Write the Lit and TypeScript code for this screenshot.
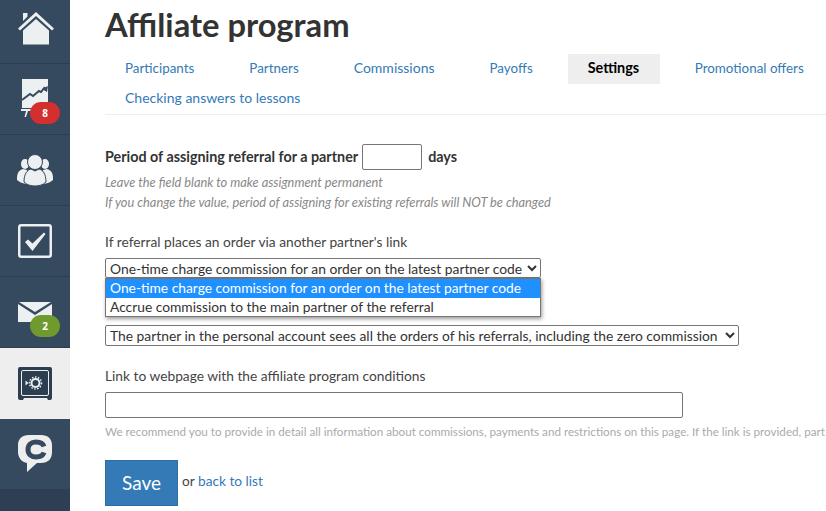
import { LitElement, html, css } from "lit";
import { customElement } from "lit/decorators.js";

const icons = {
  home: html`<svg width="36" height="33" viewBox="0 0 36 33"><path fill="#ecf0f1" d="M5 1h4.500v3.500L5 9zM18 0 36 16.500 34 18.500 18 4 2 18.500 0 16.500z"/><path fill="#ecf0f1" d="M18 7 31 18.500V32.500H5V18.500z"/></svg>`,
  chart: html`<svg width="28" height="40" viewBox="0 0 28 40"><path fill="#ecf0f1" d="M1 0h26v29H1z"/><path fill="#ecf0f1" d="M0 30h22v2H0zM5 32h2l-2 6H3.500z"/><path fill="none" stroke="#35495f" stroke-width="2" d="M1 21l8-6 3 2 6-5 2 1 4-5"/><path fill="#35495f" d="M27 7l-1 6-5-3z"/></svg>`,
  people: html`<svg width="36" height="32" viewBox="0 0 36 32"><ellipse cx="8" cy="10" rx="4" ry="5" fill="#ecf0f1"/><ellipse cx="28" cy="10" rx="4" ry="5" fill="#ecf0f1"/><path fill="#ecf0f1" d="M0 24c0-5 2-8 6-9l4 1-1 14C5 29 2 28 0 26zM36 24c0-5-2-8-6-9l-4 1 1 14c4-1 7-2 9-4z"/><circle cx="18" cy="8" r="7.500" fill="#ecf0f1" stroke="#35495f" stroke-width="1"/><path fill="#ecf0f1" stroke="#35495f" stroke-width="1" d="M7 28c0-8 3-12 7-13l4 2 4-2c4 1 7 5 7 13-3 3-7 4-11 4s-8-1-11-4z"/></svg>`,
  check: html`<svg width="34" height="34" viewBox="0 0 34 34"><rect x="1.250" y="1.250" width="31.500" height="31.500" rx="2" fill="#35495f" stroke="#ecf0f1" stroke-width="2.500"/><path fill="#ecf0f1" d="M7 18l3-2.500 4.500 4L26 8.500l1.500 1.500L14.500 27z"/></svg>`,
  mail: html`<svg width="34" height="20" viewBox="0 0 34 20"><path fill="#ecf0f1" d="M1 0h32L17 10zM0 2l17 11L34 2v18H0z"/></svg>`,
  safe: html`<svg width="34" height="34" viewBox="0 0 34 34"><path fill="#2c3e50" d="M2 0h30a2 2 0 0 1 2 2v29a2 2 0 0 1-2 2h-2l-1-2H6l-1 2H2a2 2 0 0 1-2-2V2a2 2 0 0 1 2-2z"/><rect x="3.500" y="3.500" width="27" height="25" rx="1.500" fill="none" stroke="#ecf0f1" stroke-width="1"/><circle cx="17.500" cy="16" r="4" fill="none" stroke="#ecf0f1" stroke-width="2"/><circle cx="17.500" cy="16" r="6" fill="none" stroke="#ecf0f1" stroke-width="1.500" stroke-dasharray="1.500 1.500"/><path fill="#ecf0f1" d="M7.500 13.500l3 2.500-3 2.500z"/></svg>`,
  chat: html`<svg width="34" height="38" viewBox="0 0 34 38"><path fill="#eeeeee" d="M11 0h12c7 0 11 4 11 10v7c0 7-4 11-11 11h-4l-10 9v-9c-5-1-9-5-9-11V10C0 4 4 0 11 0z"/><path fill="none" stroke="#35495f" stroke-width="5" d="M26 17.500c-1 3-4 4.500-8 4.500-5 0-8-3-8-7.500S13 7 18 7c4 0 7 1.500 8 4.500"/></svg>`,
};

@customElement("app-root")
export class AppRoot extends LitElement {
  static styles = css`
    :host {
      display: flex;
      width: 826px;
      height: 511px;
      overflow: hidden;
      background: #fff;
      font-family: "Lato", "Liberation Sans", sans-serif;
      color: #333;
    }
    .side {
      width: 70px;
      flex: none;
      background: #2f3f53;
      display: flex;
      flex-direction: column;
      height: 511px;
    }
    .item {
      height: 71px;
      box-sizing: border-box;
      background: #35495f;
      border-bottom: 1px solid #2c3e50;
      display: flex;
      align-items: center;
      justify-content: center;
      position: relative;
    }
    .item.first { height: 64px; align-items: flex-start; padding: 12px 0 0 1px; }
    .item.active { background: #eeeeee; border-bottom: none; }
    .item.last { border-bottom: none; height: 70px; }
    .badge {
      position: absolute;
      left: 30px;
      top: 38px;
      width: 30px;
      height: 22px;
      border-radius: 11px;
      color: #fff;
      font: 700 10px/22px "Open Sans", sans-serif;
      text-align: center;
    }
    .red { background: #d32f2f; }
    .green { background: #6f9a2e; }
    .main {
      flex: 1;
      min-width: 0;
      padding: 0 0 0 35px;
      font-size: 14px;
      white-space: nowrap;
    }
    h1 {
      margin: 0;
      padding-top: 5px;
      height: 54px;
      box-sizing: border-box;
      font-size: 32.700px;
      line-height: 40px;
      font-weight: 700;
      color: #333;
    }
    .tabs {
      display: flex;
      flex-wrap: wrap;
      border-bottom: 1px solid #eee;
      width: 721px;
      column-gap: 15px;
    }
    .tab {
      height: 30px;
      line-height: 28px;
      padding: 0 20px;
      font-size: 13.400px;
      color: #337ab7;
    }
    .tab.lg { font-size: 14px; }
    .tab.on { background: #eee; color: #000; font-weight: 700; font-size: 14.400px; width: 52px; }
    .period {
      margin-top: 29px;
      display: flex;
      align-items: flex-start;
      height: 26px;
      line-height: 25px;
      font-weight: 700;
      font-size: 14.340px;
    }
    .period input {
      width: 60px;
      height: 26px;
      box-sizing: border-box;
      margin: 0 6px 0 4px;
      border: 1px solid #767676;
      border-radius: 2px;
      padding: 0;
      background: #fff;
    }
    .hint {
      font-style: italic;
      font-size: 12.800px;
      line-height: 20px;
      color: #888;
    }
    .hints { margin-top: 2px; }
    .label { font-size: 13.750px; line-height: 20px; color: #444; }
    .l1 { margin-top: 20px; }
    .wrap { position: relative; margin-top: 6px; width: 436px; height: 20px; }
    select {
      display: block;
      height: 20px;
      font-family: inherit;
      font-size: 13.830px;
      color: #333;
      background: #fff;
      border: 1px solid #767676;
      border-radius: 2px;
      padding: 0;
      box-sizing: border-box;
    }
    .s1 { width: 436px; }
    .s2 { width: 634px; height: 21px; margin-top: 47px; }
    .pop {
      position: absolute;
      left: 0;
      top: 20px;
      width: 436px;
      box-sizing: border-box;
      background: #fff;
      border: 1px solid #767676;
      box-shadow: 1px 2px 4px rgba(0, 0, 0, 0.4);
      font-size: 13.800px;
      color: #333;
    }
    .opt { height: 18px; line-height: 18px; padding-left: 4px; }
    .opt.sel { height: 19px; background: #1e90ff; color: #fff; }
    .l2 { margin-top: 20px; }
    .url {
      display: block;
      width: 578px;
      height: 26px;
      box-sizing: border-box;
      margin-top: 6px;
      border: 1px solid #767676;
      border-radius: 2px;
      padding: 0;
      background: #fff;
    }
    .small { margin-top: 5px; font-size: 11.660px; line-height: 16px; color: #aaa; }
    .actions { margin-top: 21px; display: flex; align-items: center; gap: 4px; }
    button {
      width: 73px;
      height: 46px;
      background: #337ab7;
      border: 1px solid #2e6da4;
      color: #fff;
      font: 19px "Lato", sans-serif;
      padding: 0 0 2px;
    }
    .actions span { font-size: 13.700px; color: #444; position: relative; top: -3px; }
    a { color: #337ab7; text-decoration: none; }
  `;

  render() {
    return html`
      <nav class="side">
        <div class="item first">${icons.home}</div>
        <div class="item">${icons.chart}<span class="badge red">8</span></div>
        <div class="item">${icons.people}</div>
        <div class="item">${icons.check}</div>
        <div class="item">${icons.mail}<span class="badge green">2</span></div>
        <div class="item active">${icons.safe}</div>
        <div class="item last">${icons.chat}</div>
      </nav>
      <main class="main">
        <h1>Affiliate program</h1>
        <div class="tabs">
          <div class="tab">Participants</div>
          <div class="tab">Partners</div>
          <div class="tab lg">Commissions</div>
          <div class="tab">Payoffs</div>
          <div class="tab on">Settings</div>
          <div class="tab">Promotional offers</div>
          <div class="tab lg">Checking answers to lessons</div>
        </div>
        <div class="period">Period of assigning referral for a partner<input type="text" />days</div>
        <div class="hints">
          <div class="hint">Leave the field blank to make assignment permanent</div>
          <div class="hint">If you change the value, period of assigning for existing referrals will NOT be changed</div>
        </div>
        <div class="label l1">If referral places an order via another partner's link</div>
        <div class="wrap">
          <select class="s1"><option>One-time charge commission for an order on the latest partner code</option></select>
          <div class="pop">
            <div class="opt sel">One-time charge commission for an order on the latest partner code</div>
            <div class="opt">Accrue commission to the main partner of the referral</div>
          </div>
        </div>
        <select class="s2"><option>The partner in the personal account sees all the orders of his referrals, including the zero commission</option></select>
        <div class="label l2">Link to webpage with the affiliate program conditions</div>
        <input class="url" type="text" />
        <div class="small">We recommend you to provide in detail all information about commissions, payments and restrictions on this page. If the link is provided, part</div>
        <div class="actions"><button>Save</button><span>or <a href="#">back to list</a></span></div>
      </main>
    `;
  }
}
